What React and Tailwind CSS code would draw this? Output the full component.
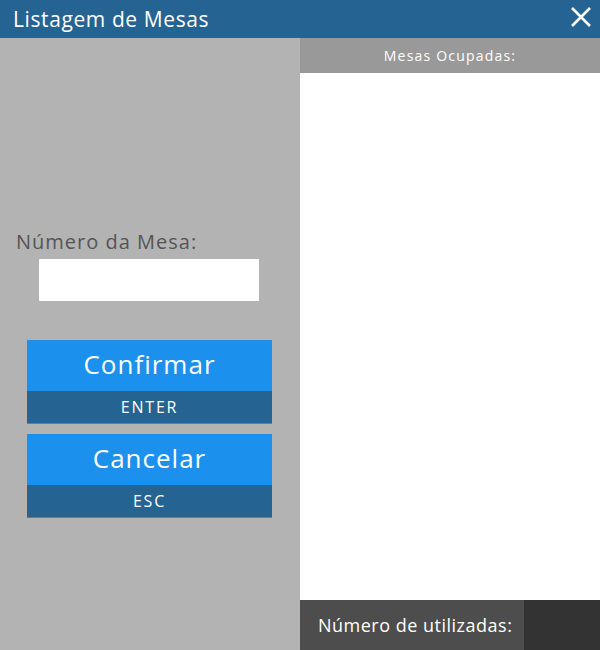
import React from "react";

export default function App() {
  const font = { fontFamily: '"Open Sans", "Liberation Sans", sans-serif' };
  return (
    <div className="w-[600px] h-[650px] flex flex-col overflow-hidden" style={font}>
      <div className="h-[38px] bg-[#256392] flex items-center justify-between pl-[13px] pr-[8px]">
        <span className="text-white text-[21px] leading-none tracking-[0.6px]">Listagem de Mesas</span>
        <svg width="22" height="22" viewBox="0 0 22 22" className="mt-[-4px]">
          <path d="M2 2 L20 20 M20 2 L2 20" stroke="white" strokeWidth="2.6" strokeLinecap="butt" />
        </svg>
      </div>
      <div className="flex flex-1">
        <div className="w-[300px] bg-[#b3b3b3] flex flex-col">
          <div className="h-[192px]" />
          <div className="pl-[16px] text-[20px] text-[#555] leading-[24px] tracking-[1px]">Número da Mesa:</div>
          <div className="mt-[5px] ml-[39px] w-[220px] h-[42px] bg-white" />
          <div className="mt-[39px] ml-[27px] w-[245px] flex flex-col">
            <div className="h-[51px] pb-[3px] bg-[#1b91ed] text-white text-[26px] tracking-[1px] flex items-center justify-center">Confirmar</div>
            <div className="h-[33px] bg-[#256392] text-white text-[16px] font-medium tracking-[1.8px] flex items-center justify-center border-b border-[#1b91ed]">ENTER</div>
            <div className="h-[10px]" />
            <div className="h-[51px] pb-[3px] bg-[#1b91ed] text-white text-[26px] tracking-[1px] flex items-center justify-center">Cancelar</div>
            <div className="h-[33px] bg-[#256392] text-white text-[16px] font-medium tracking-[1.8px] flex items-center justify-center border-b border-[#1b91ed]">ESC</div>
          </div>
        </div>
        <div className="w-[300px] flex flex-col bg-white">
          <div className="h-[35px] bg-[#999] text-white text-[14px] tracking-[1.2px] flex items-center justify-center">Mesas Ocupadas:</div>
          <div className="flex-1" />
          <div className="h-[50px] flex">
            <div className="w-[224px] bg-[#4d4d4d] text-white text-[18px] tracking-[0.5px] flex items-center pl-[18px]">Número de utilizadas:</div>
            <div className="flex-1 bg-[#333]" />
          </div>
        </div>
      </div>
    </div>
  );
}
